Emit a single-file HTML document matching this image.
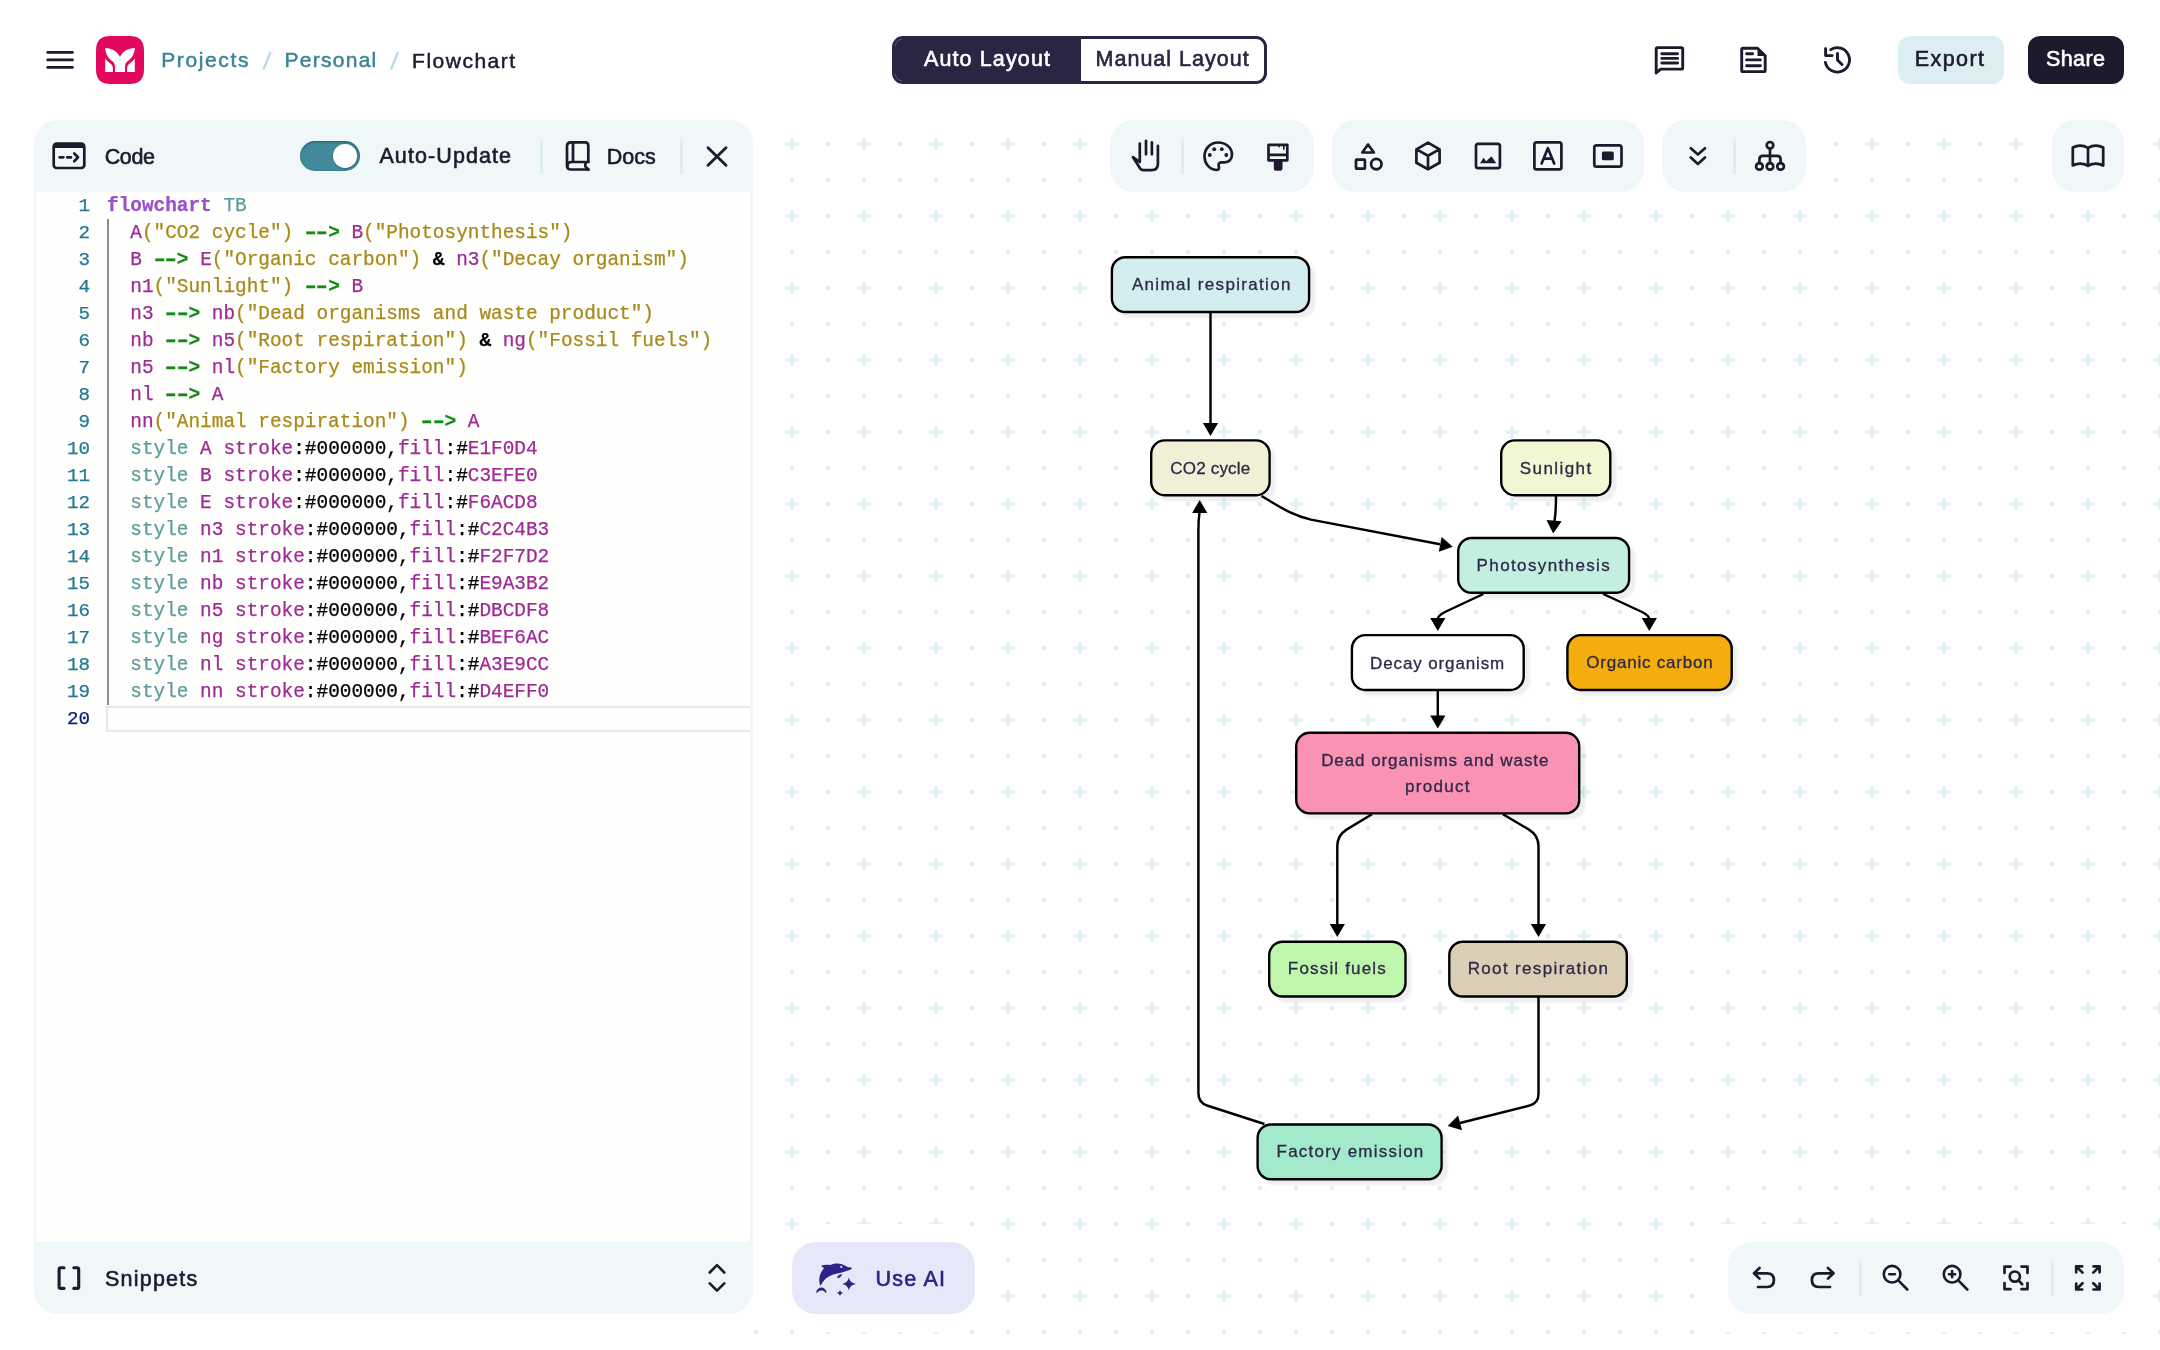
<!DOCTYPE html>
<html><head><meta charset="utf-8">
<style>
*{margin:0;padding:0;box-sizing:border-box}
html,body{width:2160px;height:1350px;overflow:hidden;background:#fff}
body{position:relative;will-change:transform;font-family:"Liberation Sans",sans-serif;color:#1E1A2E}
.a{position:absolute}
.t{position:absolute;white-space:pre;line-height:20px;font-size:20px}
.ic{position:absolute;overflow:visible}
.tb{position:absolute;background:#EFF7F9;border-radius:24px}
.sep{position:absolute;width:3px;background:#DCEEF2;border-radius:2px}
.code{position:absolute;left:0;top:0;font-family:"Liberation Mono",monospace;font-size:19.4px;line-height:27px;white-space:pre;-webkit-text-stroke:0.25px}
.ln{position:absolute;left:36px;width:54px;text-align:right;font-family:"Liberation Mono",monospace;font-size:19.25px;line-height:27px;color:#237893;-webkit-text-stroke:0.25px}
.k{color:#9B4FCB;font-weight:bold}
.d{color:#5E9C9C}
.i{color:#9F2A96}
.s{color:#A8891A}
.ar{color:#138A13;font-weight:bold}
.bk{color:#000}
.amp{color:#000;font-weight:bold}
.hy{display:inline-block;transform:scaleX(1.55)}
</style></head><body>
<!-- canvas pattern -->
<svg class="a" style="left:0;top:0" width="2160" height="1350">
<defs>
<pattern id="pt" x="756" y="108" width="72" height="72" patternUnits="userSpaceOnUse">
<rect x="30" y="34.5" width="12" height="3" fill="#DDF0F3"/>
<rect x="34.5" y="30" width="3" height="12" fill="#DDF0F3"/>
<circle cx="0" cy="36" r="2.3" fill="#DFF1F4"/>
<circle cx="72" cy="36" r="2.3" fill="#DFF1F4"/>
<circle cx="36" cy="0" r="2.3" fill="#DFF1F4"/>
<circle cx="36" cy="72" r="2.3" fill="#DFF1F4"/>
<circle cx="0" cy="0" r="2.3" fill="#DFF1F4"/>
<circle cx="72" cy="0" r="2.3" fill="#DFF1F4"/>
<circle cx="0" cy="72" r="2.3" fill="#DFF1F4"/>
<circle cx="72" cy="72" r="2.3" fill="#DFF1F4"/>
</pattern>
</defs>
<g style="filter:blur(0.7px)"><rect x="740" y="126" width="1420" height="1224" fill="url(#pt)"/></g>
<rect x="0" y="0" width="776" height="1329" fill="#fff"/>
<rect x="810" y="1224" width="144" height="108" fill="#fff"/>
<rect x="776" y="1230" width="217" height="96" fill="#fff"/>
<rect x="1710" y="1224" width="432" height="108" fill="#fff"/>
<rect x="1092" y="102" width="732" height="108" fill="#fff"/>
<rect x="2034" y="102" width="108" height="108" fill="#fff"/>
</svg>

<!-- HEADER -->

<svg class="ic" style="left:96px;top:36px" width="48" height="48" viewBox="0 0 48 48">
<path d="M24 0H33C43.5 0 48 4.5 48 15V33C48 43.5 43.5 48 33 48H15C4.5 48 0 43.5 0 33V15C0 4.5 4.5 0 15 0Z" fill="#E1085E"/>
<path d="M9.2 11.9C14.5 12 21 14.5 24 20.7C27 14.5 33.5 12 38.8 11.9C38.7 17.5 35.5 22.5 31.5 25.3C29.8 26.6 29 28.3 29 30.5V36H19V30.5C19 28.3 18.2 26.6 16.5 25.3C12.5 22.5 9.3 17.5 9.2 11.9Z M9.2 22.6C10.5 24.5 12 25.8 14 27.2C15.8 28.5 16.9 30 16.9 32V36H9.2Z M38.8 22.6C37.5 24.5 36 25.8 34 27.2C32.2 28.5 31.1 30 31.1 32V36H38.8Z" fill="#fff"/>
</svg>
<svg class="a" style="left:0;top:0" width="520" height="90"><path d="M263.8 68.6L270.2 52.9M391.3 68.6L397.7 52.9" stroke="#B4DCE3" stroke-width="2.3" stroke-linecap="round"/></svg>
<div class="t" id="t_projects" style="left:161.21px;top:50.14px;font-size:21px;color:#3A8497;letter-spacing:1.624px;-webkit-text-stroke:0.5px #3A8497">Projects</div>
<div class="t" id="t_personal" style="left:284.38px;top:50.14px;font-size:21px;color:#3A8497;letter-spacing:1.289px;-webkit-text-stroke:0.5px #3A8497">Personal</div>
<div class="t" id="t_flowchart" style="left:412.09px;top:50.53px;font-size:21px;color:#1E1A2E;letter-spacing:1.504px;-webkit-text-stroke:0.5px #1E1A2E">Flowchart</div>

<div class="a" style="left:892px;top:36px;width:375px;height:48px;border:3px solid #2B2442;border-radius:11px;background:#fff;overflow:hidden">
  <div class="a" style="left:0;top:0;width:186px;height:42px;background:#2B2442"></div>
</div>
<div class="t" id="t_auto" style="left:923.95px;top:49.13px;font-size:21.5px;color:#FFFFFF;letter-spacing:1.129px;-webkit-text-stroke:0.6px #FFFFFF">Auto Layout</div>
<div class="t" id="t_manual" style="left:1095.55px;top:49.35px;font-size:21.5px;color:#2B2442;letter-spacing:1.005px;-webkit-text-stroke:0.6px #2B2442">Manual Layout</div>

<div class="a" style="left:1898px;top:36px;width:106px;height:48px;background:#DCEEF2;border-radius:12px"></div>
<div class="t" id="t_export" style="left:1914.80px;top:49.04px;font-size:21.5px;color:#1E1A2E;letter-spacing:1.426px;-webkit-text-stroke:0.6px #1E1A2E">Export</div>
<div class="a" style="left:2028px;top:36px;width:96px;height:48px;background:#1E1A2E;border-radius:12px"></div>
<div class="t" id="t_share" style="left:2046.00px;top:49.13px;font-size:21.5px;color:#FFFFFF;letter-spacing:0.396px;-webkit-text-stroke:0.6px #FFFFFF">Share</div>

<!-- LEFT PANEL -->
<div class="a" style="left:33.5px;top:120px;width:719.5px;height:1194px;background:#EFF7F9;border-radius:24px"></div>
<div class="a" style="left:36px;top:192px;width:714px;height:1050px;background:#FEFEFC"></div>

<div id="codearea">
<div class="a" style="left:107px;top:219px;width:1.5px;height:486px;background:#8F8F8F"></div>
<div class="a" style="left:106px;top:705.5px;width:644px;height:26px;border:2.5px solid #E8E8E8;border-right:none"></div>
<div class="ln" style="top:193px;color:#237893">1</div>
<div class="code" style="left:107px;top:193px"><span class=k>flowchart</span> <span class=d>TB</span></div>
<div class="ln" style="top:220px;color:#237893">2</div>
<div class="code" style="left:107px;top:220px">  <span class=i>A</span><span class=s>("CO2 cycle")</span> <span class=ar><span class=hy>-</span><span class=hy>-</span>&gt;</span> <span class=i>B</span><span class=s>("Photosynthesis")</span></div>
<div class="ln" style="top:247px;color:#237893">3</div>
<div class="code" style="left:107px;top:247px">  <span class=i>B</span> <span class=ar><span class=hy>-</span><span class=hy>-</span>&gt;</span> <span class=i>E</span><span class=s>("Organic carbon")</span> <span class=amp>&amp;</span> <span class=i>n3</span><span class=s>("Decay organism")</span></div>
<div class="ln" style="top:274px;color:#237893">4</div>
<div class="code" style="left:107px;top:274px">  <span class=i>n1</span><span class=s>("Sunlight")</span> <span class=ar><span class=hy>-</span><span class=hy>-</span>&gt;</span> <span class=i>B</span></div>
<div class="ln" style="top:301px;color:#237893">5</div>
<div class="code" style="left:107px;top:301px">  <span class=i>n3</span> <span class=ar><span class=hy>-</span><span class=hy>-</span>&gt;</span> <span class=i>nb</span><span class=s>("Dead organisms and waste product")</span></div>
<div class="ln" style="top:328px;color:#237893">6</div>
<div class="code" style="left:107px;top:328px">  <span class=i>nb</span> <span class=ar><span class=hy>-</span><span class=hy>-</span>&gt;</span> <span class=i>n5</span><span class=s>("Root respiration")</span> <span class=amp>&amp;</span> <span class=i>ng</span><span class=s>("Fossil fuels")</span></div>
<div class="ln" style="top:355px;color:#237893">7</div>
<div class="code" style="left:107px;top:355px">  <span class=i>n5</span> <span class=ar><span class=hy>-</span><span class=hy>-</span>&gt;</span> <span class=i>nl</span><span class=s>("Factory emission")</span></div>
<div class="ln" style="top:382px;color:#237893">8</div>
<div class="code" style="left:107px;top:382px">  <span class=i>nl</span> <span class=ar><span class=hy>-</span><span class=hy>-</span>&gt;</span> <span class=i>A</span></div>
<div class="ln" style="top:409px;color:#237893">9</div>
<div class="code" style="left:107px;top:409px">  <span class=i>nn</span><span class=s>("Animal respiration")</span> <span class=ar><span class=hy>-</span><span class=hy>-</span>&gt;</span> <span class=i>A</span></div>
<div class="ln" style="top:436px;color:#237893">10</div>
<div class="code" style="left:107px;top:436px">  <span class=d>style</span> <span class=i>A</span> <span class=i>stroke</span><span class=bk>:#000000,</span><span class=i>fill</span><span class=bk>:#</span><span class=i>E1F0D4</span></div>
<div class="ln" style="top:463px;color:#237893">11</div>
<div class="code" style="left:107px;top:463px">  <span class=d>style</span> <span class=i>B</span> <span class=i>stroke</span><span class=bk>:#000000,</span><span class=i>fill</span><span class=bk>:#</span><span class=i>C3EFE0</span></div>
<div class="ln" style="top:490px;color:#237893">12</div>
<div class="code" style="left:107px;top:490px">  <span class=d>style</span> <span class=i>E</span> <span class=i>stroke</span><span class=bk>:#000000,</span><span class=i>fill</span><span class=bk>:#</span><span class=i>F6ACD8</span></div>
<div class="ln" style="top:517px;color:#237893">13</div>
<div class="code" style="left:107px;top:517px">  <span class=d>style</span> <span class=i>n3</span> <span class=i>stroke</span><span class=bk>:#000000,</span><span class=i>fill</span><span class=bk>:#</span><span class=i>C2C4B3</span></div>
<div class="ln" style="top:544px;color:#237893">14</div>
<div class="code" style="left:107px;top:544px">  <span class=d>style</span> <span class=i>n1</span> <span class=i>stroke</span><span class=bk>:#000000,</span><span class=i>fill</span><span class=bk>:#</span><span class=i>F2F7D2</span></div>
<div class="ln" style="top:571px;color:#237893">15</div>
<div class="code" style="left:107px;top:571px">  <span class=d>style</span> <span class=i>nb</span> <span class=i>stroke</span><span class=bk>:#000000,</span><span class=i>fill</span><span class=bk>:#</span><span class=i>E9A3B2</span></div>
<div class="ln" style="top:598px;color:#237893">16</div>
<div class="code" style="left:107px;top:598px">  <span class=d>style</span> <span class=i>n5</span> <span class=i>stroke</span><span class=bk>:#000000,</span><span class=i>fill</span><span class=bk>:#</span><span class=i>DBCDF8</span></div>
<div class="ln" style="top:625px;color:#237893">17</div>
<div class="code" style="left:107px;top:625px">  <span class=d>style</span> <span class=i>ng</span> <span class=i>stroke</span><span class=bk>:#000000,</span><span class=i>fill</span><span class=bk>:#</span><span class=i>BEF6AC</span></div>
<div class="ln" style="top:652px;color:#237893">18</div>
<div class="code" style="left:107px;top:652px">  <span class=d>style</span> <span class=i>nl</span> <span class=i>stroke</span><span class=bk>:#000000,</span><span class=i>fill</span><span class=bk>:#</span><span class=i>A3E9CC</span></div>
<div class="ln" style="top:679px;color:#237893">19</div>
<div class="code" style="left:107px;top:679px">  <span class=d>style</span> <span class=i>nn</span> <span class=i>stroke</span><span class=bk>:#000000,</span><span class=i>fill</span><span class=bk>:#</span><span class=i>D4EFF0</span></div>
<div class="ln" style="top:706px;color:#0B216F">20</div>
<div class="code" style="left:107px;top:706px"></div>
</div>

<!-- TOOLBARS -->
<div class="tb" style="left:1110px;top:120px;width:204px;height:72px"></div>
<div class="tb" style="left:1332px;top:120px;width:312px;height:72px"></div>
<div class="tb" style="left:1662px;top:120px;width:144px;height:72px"></div>
<div class="tb" style="left:2052px;top:120px;width:72px;height:72px"></div>
<div class="tb" style="left:1728px;top:1242px;width:396px;height:72px"></div>
<div class="a" style="left:792px;top:1242px;width:183px;height:72px;background:#E6E7F8;border-radius:24px"></div>


<!-- panel header -->
<div class="t" id="t_code" style="left:104.69px;top:146.81px;font-size:21.5px;color:#1E1A2E;letter-spacing:-0.347px;-webkit-text-stroke:0.6px #1E1A2E">Code</div>
<div class="a" style="left:300px;top:141px;width:60px;height:30px;background:#428A9B;border-radius:15px;box-shadow:inset 0 2px 2px rgba(0,0,0,0.18), inset 0 0 0 1px rgba(0,40,60,0.12)"></div>
<div class="a" style="left:332.9px;top:144px;width:23.8px;height:23.8px;background:#fff;border-radius:50%;box-shadow:0 1px 1.5px rgba(0,0,0,0.3)"></div>
<div class="t" id="t_autoupd" style="left:379.44px;top:146.38px;font-size:21.5px;color:#1E1A2E;letter-spacing:1.092px;-webkit-text-stroke:0.6px #1E1A2E">Auto-Update</div>
<div class="sep" style="left:540px;top:138.5px;height:35px"></div>
<div class="t" id="t_docs" style="left:606.79px;top:147.13px;font-size:21.5px;color:#1E1A2E;letter-spacing:-0.044px;-webkit-text-stroke:0.6px #1E1A2E">Docs</div>
<div class="sep" style="left:679.5px;top:138.5px;height:35px"></div>
<div class="t" id="t_snip" style="left:105.05px;top:1268.60px;font-size:21.5px;color:#1E1A2E;letter-spacing:1.207px;-webkit-text-stroke:0.6px #1E1A2E">Snippets</div>
<div class="t" id="t_useai" style="left:875.45px;top:1268.99px;font-size:21.5px;color:#2E2387;letter-spacing:1.231px;-webkit-text-stroke:0.6px #2E2387">Use AI</div>
<div class="sep" style="left:1180.5px;top:138.5px;height:35px"></div>
<div class="sep" style="left:1732.5px;top:138.5px;height:35px"></div>
<div class="sep" style="left:1858.5px;top:1260.5px;height:35px"></div>
<div class="sep" style="left:2050.5px;top:1260.5px;height:35px"></div>
<div id="diagram">
<svg class="a" style="left:0;top:0" width="2160" height="1350">
<defs><filter id="sh" x="-10%" y="-20%" width="130%" height="160%"><feGaussianBlur in="SourceAlpha" stdDeviation="1.1"/><feOffset dx="4.5" dy="5" result="b"/><feComponentTransfer><feFuncA type="linear" slope="0.065"/></feComponentTransfer><feMerge><feMergeNode/><feMergeNode in="SourceGraphic"/></feMerge></filter></defs>
<path d="M1210.5 313V423" fill="none" stroke="#000" stroke-width="2.45"/>
<path d="M1261.5 496C1284 509.5 1293 515.5 1311 519.6L1440 544.3" fill="none" stroke="#000" stroke-width="2.45"/>
<path d="M1556 496C1556 505 1556 512 1554.5 521" fill="none" stroke="#000" stroke-width="2.45"/>
<path d="M1483.3 594L1446 611.5Q1437.8 615.5 1437.8 619" fill="none" stroke="#000" stroke-width="2.45"/>
<path d="M1603.3 594L1641 611.5Q1649.3 615.5 1649.3 619" fill="none" stroke="#000" stroke-width="2.45"/>
<path d="M1437.8 691V716" fill="none" stroke="#000" stroke-width="2.45"/>
<path d="M1372 814.2L1346.5 829.6Q1337.3 835.5 1337.3 846V924" fill="none" stroke="#000" stroke-width="2.45"/>
<path d="M1503 814.2L1529 829.6Q1538.5 835.5 1538.5 846V924" fill="none" stroke="#000" stroke-width="2.45"/>
<path d="M1538.5 997V1094Q1538.5 1103 1529.6 1105.5L1460 1123" fill="none" stroke="#000" stroke-width="2.45"/>
<path d="M1264.4 1124L1207 1105.5Q1198.4 1102.5 1198.4 1093V530Q1198.4 520 1199.5 512" fill="none" stroke="#000" stroke-width="2.45"/>
<path d="M0 0.4L-7.6 -12.4L7.6 -12.4Z" transform="translate(1210.5 435.5) rotate(0)" fill="#000"/>
<path d="M0 0.4L-7.6 -12.4L7.6 -12.4Z" transform="translate(1452.4 546.7) rotate(-79.2)" fill="#000"/>
<path d="M0 0.4L-7.6 -12.4L7.6 -12.4Z" transform="translate(1553.2 533) rotate(4)" fill="#000"/>
<path d="M0 0.4L-7.6 -12.4L7.6 -12.4Z" transform="translate(1437.8 630.5) rotate(0)" fill="#000"/>
<path d="M0 0.4L-7.6 -12.4L7.6 -12.4Z" transform="translate(1649.3 630.5) rotate(0)" fill="#000"/>
<path d="M0 0.4L-7.6 -12.4L7.6 -12.4Z" transform="translate(1437.8 728) rotate(0)" fill="#000"/>
<path d="M0 0.4L-7.6 -12.4L7.6 -12.4Z" transform="translate(1337.3 936.5) rotate(0)" fill="#000"/>
<path d="M0 0.4L-7.6 -12.4L7.6 -12.4Z" transform="translate(1538.5 936.5) rotate(0)" fill="#000"/>
<path d="M0 0.4L-7.6 -12.4L7.6 -12.4Z" transform="translate(1448.1 1126) rotate(75)" fill="#000"/>
<path d="M0 0.4L-7.6 -12.4L7.6 -12.4Z" transform="translate(1199.7 500.5) rotate(180)" fill="#000"/>
<rect x="1111.90" y="257.20" width="197.20" height="54.80" rx="13.5" fill="#D4EEF0" stroke="#000" stroke-width="2.4" filter="url(#sh)"/>
<rect x="1151.20" y="440.40" width="118.40" height="54.80" rx="13.5" fill="#F1EFD6" stroke="#000" stroke-width="2.4" filter="url(#sh)"/>
<rect x="1501.20" y="440.40" width="109.10" height="54.80" rx="13.5" fill="#F2F6D2" stroke="#000" stroke-width="2.4" filter="url(#sh)"/>
<rect x="1458.20" y="537.95" width="170.90" height="54.80" rx="13.5" fill="#C3EFE0" stroke="#000" stroke-width="2.4" filter="url(#sh)"/>
<rect x="1351.90" y="635.15" width="171.80" height="54.80" rx="13.5" fill="#FFFFFF" stroke="#000" stroke-width="2.4" filter="url(#sh)"/>
<rect x="1567.40" y="635.15" width="164.30" height="54.80" rx="13.5" fill="#F5AD10" stroke="#000" stroke-width="2.4" filter="url(#sh)"/>
<rect x="1296.20" y="732.80" width="283.00" height="80.60" rx="13.5" fill="#F992B3" stroke="#000" stroke-width="2.4" filter="url(#sh)"/>
<rect x="1269.20" y="941.75" width="136.30" height="54.80" rx="13.5" fill="#BEF6AC" stroke="#000" stroke-width="2.4" filter="url(#sh)"/>
<rect x="1449.30" y="941.75" width="177.50" height="54.80" rx="13.5" fill="#DBCEB6" stroke="#000" stroke-width="2.4" filter="url(#sh)"/>
<rect x="1257.60" y="1124.50" width="184.00" height="54.80" rx="13.5" fill="#A3E9CC" stroke="#000" stroke-width="2.4" filter="url(#sh)"/>
</svg>
<div class="t" id="n_animal" style="left:1131.94px;top:275.11px;font-size:17px;color:#2C2A46;letter-spacing:1.319px;-webkit-text-stroke:0.3px #2C2A46">Animal respiration</div>
<div class="t" id="n_co2" style="left:1170.23px;top:458.51px;font-size:17px;color:#2C2A46;letter-spacing:0.204px;-webkit-text-stroke:0.3px #2C2A46">CO2 cycle</div>
<div class="t" id="n_sun" style="left:1519.85px;top:458.58px;font-size:17px;color:#2C2A46;letter-spacing:1.407px;-webkit-text-stroke:0.3px #2C2A46">Sunlight</div>
<div class="t" id="n_photo" style="left:1476.62px;top:556.48px;font-size:17px;color:#2C2A46;letter-spacing:1.373px;-webkit-text-stroke:0.3px #2C2A46">Photosynthesis</div>
<div class="t" id="n_decay" style="left:1370.12px;top:653.93px;font-size:17px;color:#2C2A46;letter-spacing:0.872px;-webkit-text-stroke:0.3px #2C2A46">Decay organism</div>
<div class="t" id="n_organic" style="left:1586.32px;top:652.78px;font-size:17px;color:#2C2A46;letter-spacing:0.774px;-webkit-text-stroke:0.3px #2C2A46">Organic carbon</div>
<div class="t" id="n_dead1" style="left:1321.17px;top:751.45px;font-size:17px;color:#2C2A46;letter-spacing:0.927px;-webkit-text-stroke:0.3px #2C2A46">Dead organisms and waste</div>
<div class="t" id="n_dead2" style="left:1405.00px;top:776.58px;font-size:17px;color:#2C2A46;letter-spacing:1.309px;-webkit-text-stroke:0.3px #2C2A46">product</div>
<div class="t" id="n_fossil" style="left:1287.85px;top:959.44px;font-size:17px;color:#2C2A46;letter-spacing:1.174px;-webkit-text-stroke:0.3px #2C2A46">Fossil fuels</div>
<div class="t" id="n_root" style="left:1467.64px;top:959.44px;font-size:17px;color:#2C2A46;letter-spacing:1.356px;-webkit-text-stroke:0.3px #2C2A46">Root respiration</div>
<div class="t" id="n_factory" style="left:1276.58px;top:1142.16px;font-size:17px;color:#2C2A46;letter-spacing:1.214px;-webkit-text-stroke:0.3px #2C2A46">Factory emission</div>
</div>
<div id="icons">
<svg class="a" style="left:0;top:0;pointer-events:none" width="2160" height="1350">
<g fill="none" stroke="#1E1A2E" stroke-width="2.7" stroke-linecap="round" stroke-linejoin="round">
<!-- code icon -->
<rect x="53.7" y="143.7" width="30.6" height="24.3" rx="3"/>
<path d="M59.6 157.3H63.4M67.2 157.3H71M74.2 153.4L78 157.3L74.2 161.2"/>
<!-- book docs -->
<path d="M588.3 162V145.6Q588.3 142.3 585 142.3H571Q567 142.3 567 146.3V165.5Q567 169.5 571 169.5H588.4"/>
<path d="M567.5 166Q567.5 162 571.5 162H588.3M573 142.6V162M586 162.3Q584.6 165.6 585.8 167L588.4 169.5"/>
<!-- close X -->
<path d="M708 147.8L726 165.2M726 147.8L708 165.2" stroke-width="2.8"/>
<!-- brackets -->
<path d="M64 1267.7H60.8Q59.1 1267.7 59.1 1269.4V1286.7Q59.1 1288.4 60.8 1288.4H64M73.8 1267.7H77Q78.7 1267.7 78.7 1269.4V1286.7Q78.7 1288.4 77 1288.4H73.8" stroke-width="3.1"/>
<!-- snippets chevrons -->
<path d="M709.7 1272.5L717 1265.2L724.3 1272.5M709.7 1283.3L717 1290.6L724.3 1283.3" stroke-width="2.6"/>
<!-- hand -->
<path d="M1139.8 161V143.6M1146 154.3V140.8M1151.9 154.3V142.4M1157.9 145.8V163.8Q1157.9 170.2 1151.5 170.2H1143.5Q1141.3 170.2 1140 168.2L1133 157.2L1139.8 162"/>
<!-- palette -->
<path d="M1218 142.5C1226 142.5 1232 148 1232 154.5C1232 159.5 1229 162.3 1224.5 162.3H1221.5C1219 162.3 1218 164 1218.8 166.2C1219.6 168.5 1218.5 170 1216.5 170C1208.5 169.5 1204.5 162.5 1204.5 156.2C1204.5 148.5 1210.5 142.5 1218 142.5Z"/>
<!-- brush -->
<path d="M1268.5 144.8H1287.3V160.3H1268.5Z M1268.5 154.8H1287.3"/>
<!-- shapes -->
<path d="M1368 144.5L1362.3 152.5H1373.9Z"/>
<rect x="1356" y="159.7" width="8.9" height="8.9" rx="0.5"/>
<circle cx="1376.3" cy="164.1" r="5.2"/>
<!-- cube -->
<path d="M1428 142.6L1439.6 149.3V162.7L1428 169.2L1416.4 162.7V149.3Z M1416.6 149.4L1428 155.7L1439.4 149.4M1428 155.7V169"/>
<!-- image -->
<rect x="1476" y="143.9" width="23.9" height="24.2" rx="2.2"/>
<!-- A text -->
<rect x="1534.4" y="142.3" width="27" height="27.1" rx="2.2"/>
<path d="M1541.6 163.5L1547.9 148.2L1554.2 163.5M1544.2 158.7H1551.6"/>
<!-- screen -->
<rect x="1594.3" y="145.3" width="27.2" height="21.3" rx="2.2"/>
<!-- double chevron -->
<path d="M1690.8 148.3L1697.9 154.5L1705 148.3M1690.8 157.5L1697.9 163.9L1705 157.5"/>
<!-- org chart -->
<circle cx="1770" cy="145.3" r="3.3"/>
<circle cx="1759.4" cy="166.4" r="3.3"/>
<circle cx="1770" cy="166.4" r="3.3"/>
<circle cx="1780.6" cy="166.4" r="3.3"/>
<path d="M1770 148.6V163.1M1759.4 163.1V159.5Q1759.4 155.8 1763 155.8H1777Q1780.6 155.8 1780.6 159.5V163.1"/>
<!-- open book -->
<path d="M2072.8 147.5V165.5Q2080.5 161.5 2088 165.8Q2095.5 161.5 2103.2 165.5V147.5Q2095.5 143.5 2088 147.8Q2080.5 143.5 2072.8 147.5Z M2088 147.8V165.8"/>
<!-- comment -->
<path d="M1656.2 73V49Q1656.2 47.6 1657.6 47.6H1681.3Q1682.7 47.6 1682.7 49V67.7Q1682.7 69.1 1681.3 69.1H1660.6Z" stroke-width="2.9"/>
<path d="M1661.8 53.8H1677.6M1661.8 58.4H1677.6M1661.8 63H1677.6" stroke-width="2.9"/>
<!-- doc -->
<path d="M1757.5 48.2H1743.1Q1741.7 48.2 1741.7 49.6V70.2Q1741.7 71.6 1743.1 71.6H1763.8Q1765.2 71.6 1765.2 70.2V55.9Z" stroke-width="2.9"/>
<path d="M1746.6 53.8H1752.6M1746.6 59.9H1760.4M1746.6 65.7H1760.4" stroke-width="2.9"/>
<!-- history -->
<path d="M1830.75 49.6A12.2 12.2 0 1 1 1825.4 62.5" stroke-width="2.9"/>
<path d="M1825.6 48.6V55.6H1832.2" stroke-width="2.9"/>
<path d="M1837.5 53.5V60L1842 64.5" stroke-width="2.9"/>
<!-- hamburger -->
<path d="M47.6 52.4H72.6M47.6 59.9H72.6M47.6 67.4H72.6" stroke-width="2.6"/>
<!-- undo -->
<path d="M1759.5 1268L1754 1273.3L1759.5 1278.6M1754.5 1273.3H1767Q1773.9 1273.3 1773.9 1280.1Q1773.9 1287 1767 1287H1758"/>
<!-- redo -->
<path d="M1828 1268L1833.5 1273.3L1828 1278.6M1833 1273.3H1818.7Q1811.9 1273.3 1811.9 1280.1Q1811.9 1287 1818.7 1287H1830"/>
<!-- zoom out -->
<circle cx="1892.1" cy="1274.2" r="8.3" stroke-width="2.6"/>
<path d="M1889.3 1274.2H1894.9M1899 1281.2L1907.3 1289.5" stroke-width="2.6"/>
<!-- zoom in -->
<circle cx="1952.1" cy="1274.2" r="8.3" stroke-width="2.6"/>
<path d="M1949 1274.2H1955.2M1952.1 1271.1V1277.3M1959 1281.2L1967.3 1289.5" stroke-width="2.6"/>
<!-- fit -->
<path d="M2004.5 1273V1266.6H2010.5M2021.5 1266.6H2027.5V1273M2027.5 1283V1289.2H2021.5M2010.5 1289.2H2004.5V1283"/>
<circle cx="2014.8" cy="1276.6" r="5.1"/>
<path d="M2018.5 1280.4L2022.2 1284.2"/>
<!-- fullscreen -->
<path d="M2076.2 1272.3V1266.3H2082.2M2076.5 1266.6L2082.5 1272.6M2093.5 1266.3H2099.6V1272.3M2099.3 1266.6L2093.3 1272.6M2099.6 1283.5V1289.5H2093.5M2099.3 1289.2L2093.3 1283.2M2082.2 1289.5H2076.2V1283.5M2076.5 1289.2L2082.5 1283.2" stroke-width="2.7"/>
</g>
<g fill="#1E1A2E">
<rect x="53.7" y="143.7" width="30.6" height="4.4" rx="1.5"/>
<circle cx="1214.2" cy="149.2" r="1.9"/><circle cx="1221.8" cy="149.2" r="1.9"/>
<circle cx="1209.8" cy="155" r="1.9"/><circle cx="1226.3" cy="155" r="1.9"/>
<rect x="1273.8" y="159.5" width="8.7" height="11.3" rx="2.2"/>
<path d="M1279.2 145V147.2M1283.8 145V149.8" stroke="#1E1A2E" stroke-width="1.6"/>
<path d="M1480 163.3L1483.6 157.8L1486.2 161.2L1491.5 156.3L1496.2 163.3Z"/>
<rect x="1601.9" y="151.4" width="11.9" height="8.9" rx="1.6"/>
<path d="M1764.5 42.6V55.2H1777" transform="translate(-0.5 0)" fill="none" stroke="#1E1A2E" stroke-width="0"/>

<path d="M1757.5 48.2L1765.2 55.9H1757.5Z"/>
</g>
<!-- dolphin -->
<g fill="#2E2387">
<path d="M821.2 1265.5C825 1264.5 828 1264.8 830.1 1265C833 1263.5 838 1262.8 842 1264.3C844.5 1265.3 846.5 1266.5 848 1267.3C850 1267.3 851.5 1267.6 851.9 1268.2C851.5 1269.5 849 1270.3 846.5 1271C843.5 1272.2 840.5 1273 837 1273.6C831 1274.8 826 1277.5 822.8 1282C821.5 1284 820.9 1285.2 820.6 1285.8C819.5 1284.5 819.2 1281.5 819.3 1279C819.6 1275 821.2 1271.5 824 1268.3C822.8 1267.3 821.8 1266.6 821.2 1265.5Z"/>
<path d="M837.2 1278.3C837.2 1276 838.5 1274.5 841.8 1273.9C841.8 1276 840.5 1277.8 837.2 1278.3Z"/>
<path d="M816 1292.3C817 1289.5 819 1287.6 821.4 1287.6C823.8 1287.6 825.8 1289.5 826.8 1292.3L825.5 1292.7C824.5 1291.2 823 1290.6 821.4 1290.6C819.8 1290.6 818.3 1291.2 817.3 1292.7Z"/>
<path d="M848.8 1277.6Q849.8 1283 855.9 1283.9Q849.8 1284.8 848.8 1290.3Q847.8 1284.8 842.2 1283.9Q847.8 1283 848.8 1277.6Z"/>
<path d="M840 1290Q840.4 1292.6 843.2 1293Q840.4 1293.4 840 1296Q839.6 1293.4 836.8 1293Q839.6 1292.6 840 1290Z"/>
</g>
<circle cx="841.3" cy="1266.9" r="1.05" fill="#E6E7F8"/>
</svg>
</div>
</body></html>
